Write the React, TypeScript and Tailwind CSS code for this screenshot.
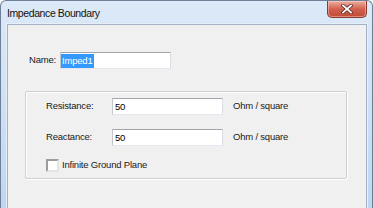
import React from "react";

const font = "font-['Liberation_Sans',Arial,sans-serif]";

function TextBox({ value, selected }: { value: string; selected?: boolean }) {
  return (
    <div className="w-[111px] h-[17px] bg-white border border-[#dcdde4] border-t-[#a3a5ab] border-l-[#c4c6cc] border-b-[#e3e9ef] flex items-center pl-[1px]">
      {selected ? (
        <span className="bg-[#3399ff] text-white leading-[14px] px-[1px] -ml-[1px]">{value}</span>
      ) : (
        <span className="text-black leading-[14px] pl-[1px]">{value}</span>
      )}
    </div>
  );
}

function CloseButton() {
  return (
    <div className="w-[40px] h-[17px] mr-[5px] rounded-b-[5px] border border-t-0 border-[#8c3a2f] bg-gradient-to-b from-[#eab0a2] via-[#d2604f] to-[#c04a35] shadow-[inset_0_0_0_1px_rgba(255,220,210,0.45)] flex items-center justify-center">
      <svg width="12" height="10" viewBox="0 0 12 10">
        <path d="M2 1.5 L10 8.5 M10 1.5 L2 8.5" stroke="#5a2a24" strokeWidth="3.4" strokeLinecap="square" />
        <path d="M2 1.5 L10 8.5 M10 1.5 L2 8.5" stroke="#ffffff" strokeWidth="1.8" strokeLinecap="square" />
      </svg>
    </div>
  );
}

function Row({ label, value }: { label: string; value: string }) {
  return (
    <div className="flex items-center h-[17px]">
      <span className="w-[66px]">{label}</span>
      <TextBox value={value} />
      <span className="ml-[10px]">Ohm / square</span>
    </div>
  );
}

export default function App() {
  return (
    <div className={`w-[373px] h-[208px] overflow-hidden bg-white ${font}`}>
      <div className="h-full flex flex-col rounded-t-[6px] border border-b-0 border-[#6f7f95] bg-gradient-to-b from-[#dce9f8] via-[#cde1f6] to-[#bdd7f2]">
        <div className="h-[23px] flex items-start justify-between shrink-0">
          <span className="pl-[6px] pt-[6px] text-[10.5px] tracking-[-0.4px] leading-[12px] text-[#111]">
            Impedance Boundary
          </span>
          <CloseButton />
        </div>
        <div className="flex-1 ml-[6px] mr-[5px] border border-b-0 border-[#a3b2c4] shadow-[0_0_0_1px_#e6eef8] bg-[#f0f0f0] text-[9.5px] tracking-[-0.2px] text-[#1a1a1a]">
          <div className="flex items-center pt-[27px] pl-[21px]">
            <span className="w-[31px]">Name:</span>
            <TextBox value="Imped1" selected />
          </div>
          <div className="ml-[17px] mt-[22px] w-[322px] h-[88px] border border-[#d0d0d0] rounded-[2px] shadow-[1px_1px_0_#ffffff,inset_1px_1px_0_#ffffff] pt-[6px] pl-[20px] flex flex-col">
            <Row label="Resistance:" value="50" />
            <div className="mt-[14px]">
              <Row label="Reactance:" value="50" />
            </div>
            <div className="mt-[13px] flex items-center h-[13px]">
              <div className="w-[13px] h-[13px] border-2 border-t-[#9c9c9c] border-l-[#9c9c9c] border-r-[#e4e4e4] border-b-[#e4e4e4] bg-white" />
              <span className="ml-[3px]">Infinite Ground Plane</span>
            </div>
          </div>
        </div>
      </div>
    </div>
  );
}
